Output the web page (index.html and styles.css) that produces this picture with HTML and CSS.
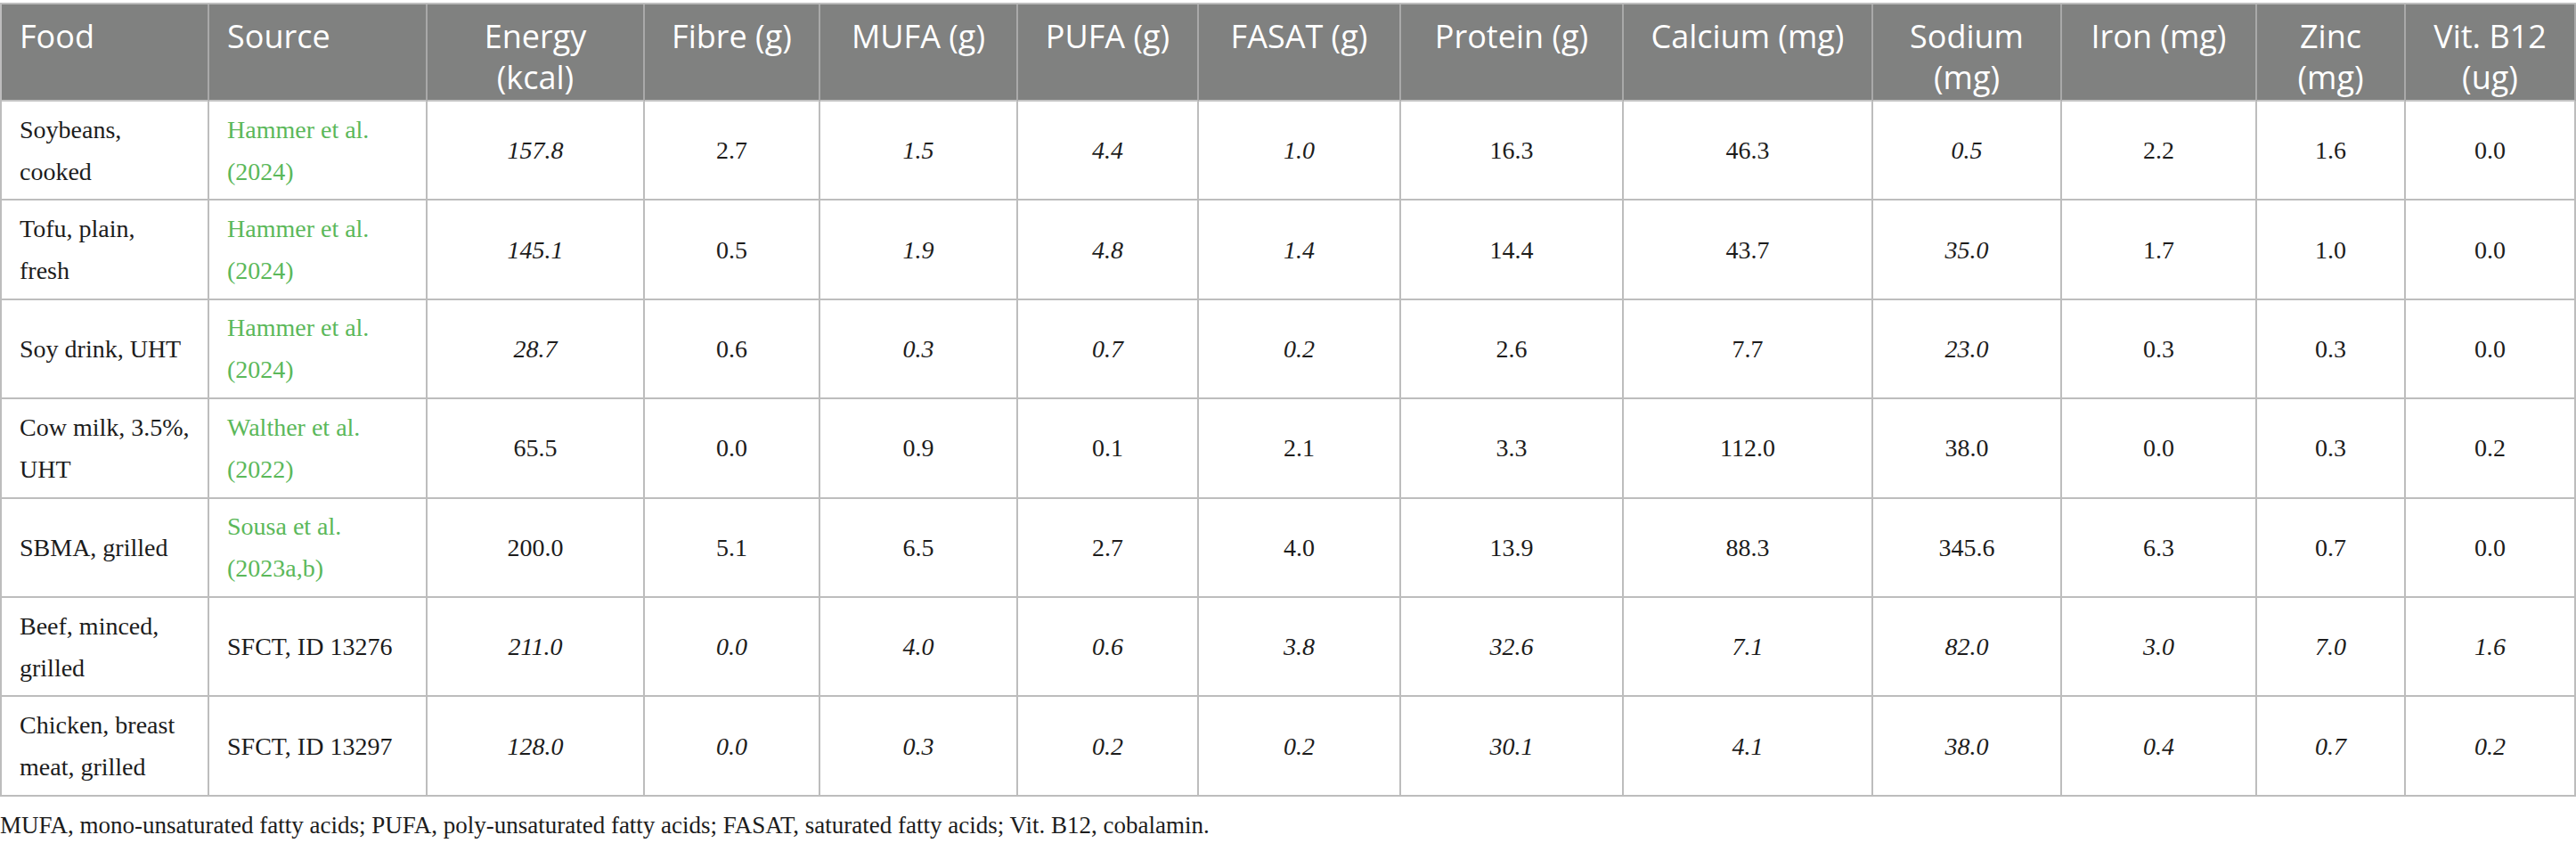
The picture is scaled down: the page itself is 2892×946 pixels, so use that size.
FILE: index.html
```html
<!DOCTYPE html>
<html lang="en">
<head>
<meta charset="utf-8">
<title>Nutrient composition</title>
<link rel="stylesheet" href="styles.css">
</head>
<body>
<div class="page">
  <table class="nutr">
    <colgroup>
      <col class="c-food"><col class="c-source"><col class="c-energy"><col class="c-fibre"><col class="c-mufa"><col class="c-pufa"><col class="c-fasat"><col class="c-protein"><col class="c-calcium"><col class="c-sodium"><col class="c-iron"><col class="c-zinc"><col class="c-b12">
    </colgroup>
    <thead>
      <tr>
        <th class="left">Food</th>
        <th class="left">Source</th>
        <th>Energy<br>(kcal)</th>
        <th>Fibre (g)</th>
        <th>MUFA (g)</th>
        <th>PUFA (g)</th>
        <th>FASAT (g)</th>
        <th>Protein (g)</th>
        <th>Calcium (mg)</th>
        <th>Sodium<br>(mg)</th>
        <th>Iron (mg)</th>
        <th>Zinc<br>(mg)</th>
        <th>Vit. B12<br>(ug)</th>
      </tr>
    </thead>
    <tbody>
      <tr>
        <td class="left">Soybeans,<br>cooked</td>
        <td class="left"><a class="ref" href="#">Hammer et al.<br>(2024)</a></td>
        <td><i>157.8</i></td><td>2.7</td><td><i>1.5</i></td><td><i>4.4</i></td><td><i>1.0</i></td><td>16.3</td><td>46.3</td><td><i>0.5</i></td><td>2.2</td><td>1.6</td><td>0.0</td>
      </tr>
      <tr>
        <td class="left">Tofu, plain,<br>fresh</td>
        <td class="left"><a class="ref" href="#">Hammer et al.<br>(2024)</a></td>
        <td><i>145.1</i></td><td>0.5</td><td><i>1.9</i></td><td><i>4.8</i></td><td><i>1.4</i></td><td>14.4</td><td>43.7</td><td><i>35.0</i></td><td>1.7</td><td>1.0</td><td>0.0</td>
      </tr>
      <tr>
        <td class="left">Soy drink, UHT</td>
        <td class="left"><a class="ref" href="#">Hammer et al.<br>(2024)</a></td>
        <td><i>28.7</i></td><td>0.6</td><td><i>0.3</i></td><td><i>0.7</i></td><td><i>0.2</i></td><td>2.6</td><td>7.7</td><td><i>23.0</i></td><td>0.3</td><td>0.3</td><td>0.0</td>
      </tr>
      <tr>
        <td class="left">Cow milk, 3.5%,<br>UHT</td>
        <td class="left"><a class="ref" href="#">Walther et al.<br>(2022)</a></td>
        <td>65.5</td><td>0.0</td><td>0.9</td><td>0.1</td><td>2.1</td><td>3.3</td><td>112.0</td><td>38.0</td><td>0.0</td><td>0.3</td><td>0.2</td>
      </tr>
      <tr>
        <td class="left">SBMA, grilled</td>
        <td class="left"><a class="ref" href="#">Sousa et al.<br>(2023a,b)</a></td>
        <td>200.0</td><td>5.1</td><td>6.5</td><td>2.7</td><td>4.0</td><td>13.9</td><td>88.3</td><td>345.6</td><td>6.3</td><td>0.7</td><td>0.0</td>
      </tr>
      <tr>
        <td class="left">Beef, minced,<br>grilled</td>
        <td class="left">SFCT, ID 13276</td>
        <td><i>211.0</i></td><td><i>0.0</i></td><td><i>4.0</i></td><td><i>0.6</i></td><td><i>3.8</i></td><td><i>32.6</i></td><td><i>7.1</i></td><td><i>82.0</i></td><td><i>3.0</i></td><td><i>7.0</i></td><td><i>1.6</i></td>
      </tr>
      <tr>
        <td class="left">Chicken, breast<br>meat, grilled</td>
        <td class="left">SFCT, ID 13297</td>
        <td><i>128.0</i></td><td><i>0.0</i></td><td><i>0.3</i></td><td><i>0.2</i></td><td><i>0.2</i></td><td><i>30.1</i></td><td><i>4.1</i></td><td><i>38.0</i></td><td><i>0.4</i></td><td><i>0.7</i></td><td><i>0.2</i></td>
      </tr>
    </tbody>
  </table>
  <p class="note">MUFA, mono-unsaturated fatty acids; PUFA, poly-unsaturated fatty acids; FASAT, saturated fatty acids; Vit. B12, cobalamin.</p>
</div>
</body>
</html>
```

FILE: styles.css
```css
html, body {
  margin: 0;
  padding: 0;
  background: #ffffff;
}

.page {
  padding-top: 3px;
  width: 2892px;
}

.nutr {
  width: 2892px;
  table-layout: fixed;
  border-collapse: separate;
  border-spacing: 0;
  border-top: 2px solid #bdbdbd;
  border-left: 2px solid #bdbdbd;
  font-family: "Liberation Serif", "Times New Roman", serif;
  color: #1c1c1c;
}

.c-food { width: 233px; }
.c-source { width: 245px; }
.c-energy { width: 244px; }
.c-fibre { width: 197px; }
.c-mufa { width: 222px; }
.c-pufa { width: 203px; }
.c-fasat { width: 227px; }
.c-protein { width: 250px; }
.c-calcium { width: 280px; }
.c-sodium { width: 212px; }
.c-iron { width: 219px; }
.c-zinc { width: 167px; }
.c-b12 { width: 191px; }

.nutr th,
.nutr td {
  box-sizing: border-box;
  border-right: 2px solid #bdbdbd;
  border-bottom: 2px solid #bdbdbd;
  text-align: center;
}

.nutr th {
  height: 109px;
  background: #808180;
  color: #ffffff;
  font-family: "Open Sans", "Noto Sans", sans-serif;
  font-weight: 400;
  font-size: 36px;
  line-height: 46px;
  vertical-align: top;
  padding: 13px 8px 0 8px;
  border-right-color: #a9a9a9;
  border-bottom-color: #c4c4c4;
}

.nutr td {
  height: 111.4px;
  font-size: 28px;
  line-height: 47px;
  vertical-align: middle;
  padding: 0 8px;
}

.nutr th.left,
.nutr td.left {
  text-align: left;
  padding-left: 20px;
  padding-right: 4px;
}

.nutr i {
  font-style: italic;
}

.ref {
  color: #5bb85a;
  text-decoration: none;
}

.note {
  margin: 14px 0 0 0;
  font-family: "Liberation Serif", "Times New Roman", serif;
  font-size: 27px;
  line-height: 36px;
  color: #1c1c1c;
}
```
